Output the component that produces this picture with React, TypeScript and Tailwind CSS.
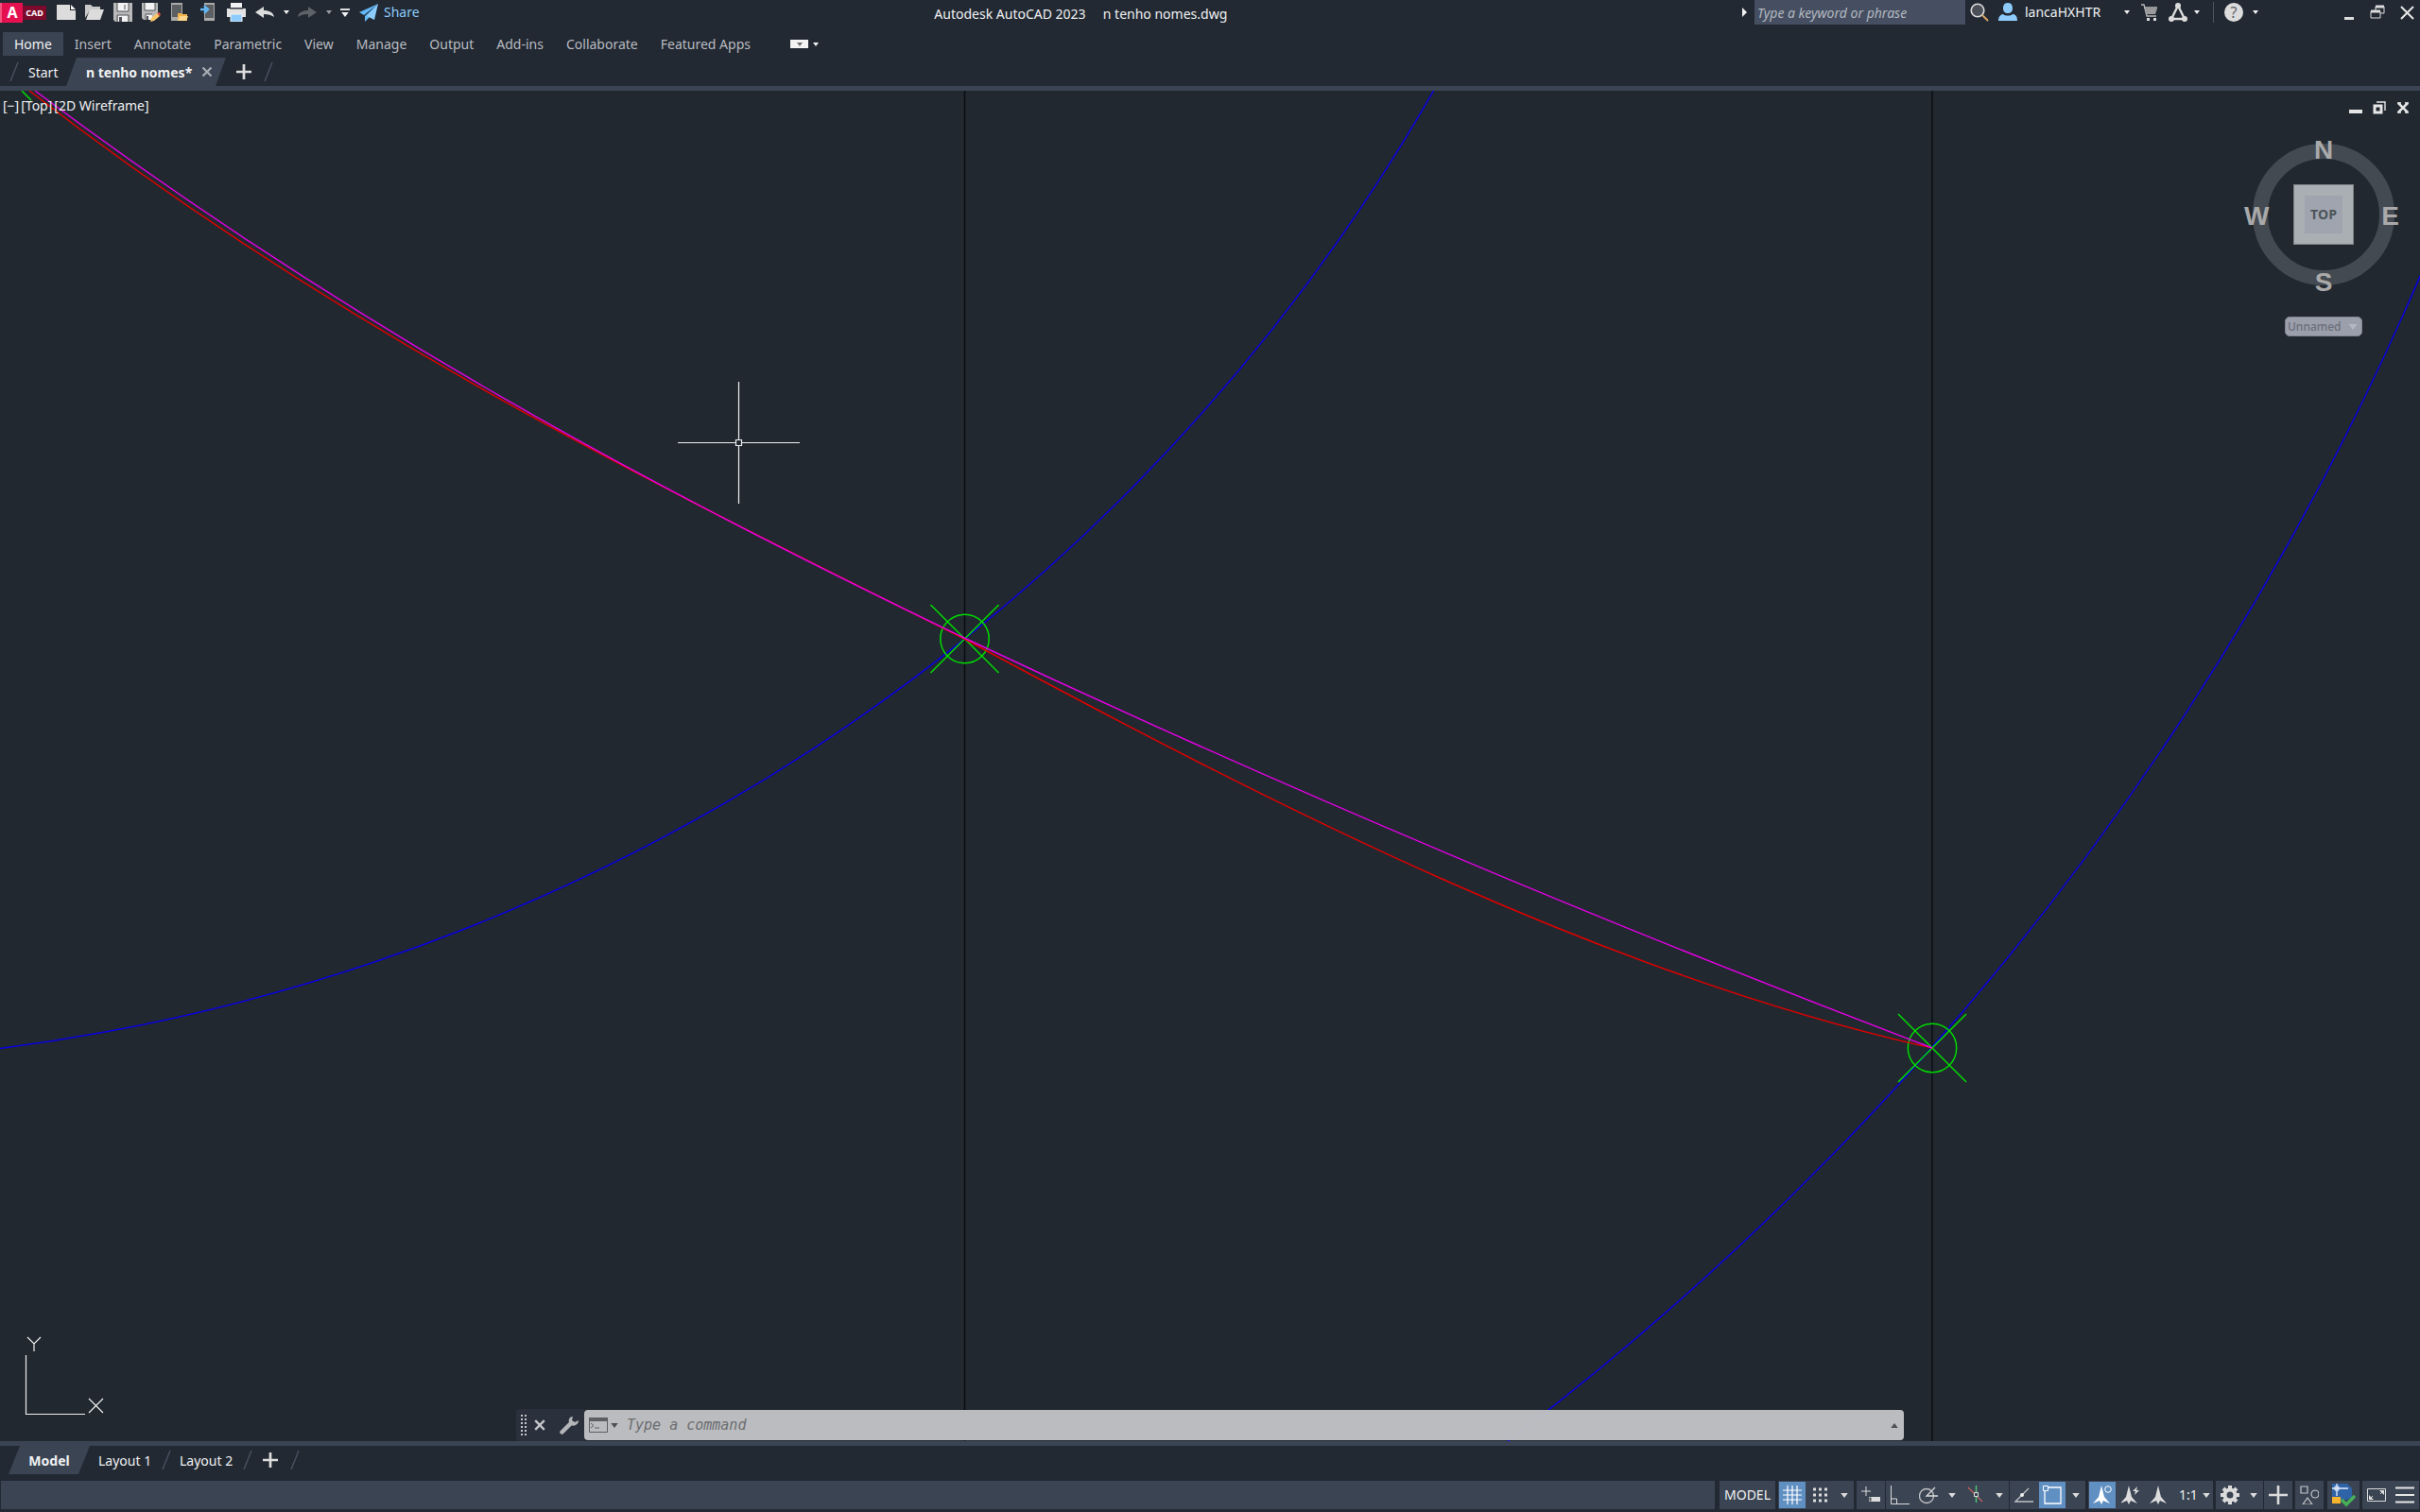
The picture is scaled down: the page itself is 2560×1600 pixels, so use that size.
import { ReactNode, useState } from "react";

const RIBBON_TABS = [
  "Home",
  "Insert",
  "Annotate",
  "Parametric",
  "View",
  "Manage",
  "Output",
  "Add-ins",
  "Collaborate",
  "Featured Apps",
];

export default function App() {
  return (
    <div className="flex h-screen w-full flex-col overflow-hidden bg-[#222933] font-['Noto_Sans',sans-serif] text-sm text-[#f0f1f2]">
      <header className="shrink-0">
        <TitleBar />
        <Ribbon />
        <DocumentTabs />
      </header>
      <Viewport />
      <LayoutTabs />
      <StatusBar />
    </div>
  );
}

function Icon(props: { children: ReactNode; className?: string }) {
  return (
    <svg
      viewBox="0 0 20 20"
      className={props.className ?? "size-5"}
      fill="none"
      aria-hidden="true"
    >
      {props.children}
    </svg>
  );
}

function IconButton(props: {
  label: string;
  children: ReactNode;
  className?: string;
}) {
  return (
    <button
      type="button"
      aria-label={props.label}
      className={`flex h-full shrink-0 items-center justify-center ${props.className ?? "w-[30px]"}`}
    >
      {props.children}
    </button>
  );
}

function Caret(props: { className?: string }) {
  return (
    <svg
      viewBox="0 0 6 4"
      className={props.className ?? "h-1 w-1.5"}
      aria-hidden="true"
    >
      <path d="M0 0h6L3 4z" fill="currentColor" />
    </svg>
  );
}

function Slash() {
  return (
    <svg viewBox="0 0 10 20" className="h-5 w-2.5 shrink-0" aria-hidden="true">
      <path d="M1 20L9 0" stroke="#4c5565" strokeWidth="1.3" />
    </svg>
  );
}

function Plus() {
  return (
    <Icon className="size-4">
      <path d="M10 0v20M0 10h20" stroke="#dcdcdc" strokeWidth="3.4" />
    </Icon>
  );
}

function TitleBar() {
  return (
    <div className="flex h-[26px] items-center">
      <button
        type="button"
        aria-label="Application menu"
        className="mr-1.5 flex h-full w-[49px] items-center"
      >
        <span className="flex h-[21px] w-6 items-center justify-center border-l-2 border-[#f2557f] bg-[#e51050] text-base leading-none font-bold text-white">
          A
        </span>
        <span className="flex h-[15px] w-[25px] items-center justify-center bg-[#7b0a2c] text-[9px] leading-none font-bold text-white">
          CAD
        </span>
      </button>
      <IconButton label="New">
        <Icon>
          <path d="M0 2h14v6h6v10H0z" fill="#dcdcdc" />
          <path d="M15 2l5 5h-5z" fill="#f5f5f5" />
        </Icon>
      </IconButton>
      <IconButton label="Open">
        <Icon>
          <path d="M0 2h6l2 2h8v4H5L0 16z" fill="#c9c9c9" />
          <path d="M5 7h15l-4 11H1z" fill="#dcdcdc" />
        </Icon>
      </IconButton>
      <IconButton label="Save">
        <Icon>
          <path d="M0 0h20v20H2l-2-2z" fill="#b9b9b9" />
          <path d="M4 0h12v9H4zM5 13h10v7H5z" fill="#f3f3f3" />
          <path d="M4 0v9h12V0M12 2v5M4 20v-7h12v7" stroke="#4e5257" />
          <path d="M6 15h3v5H6z" fill="#4e5257" />
        </Icon>
      </IconButton>
      <IconButton label="Save As">
        <Icon>
          <path d="M0 0h17v12l-6 6H2l-2-2z" fill="#b9b9b9" />
          <path d="M3 0h11v8H3zM4 12h7v6H4z" fill="#f3f3f3" />
          <path d="M3 0v8h11V0M4 18v-6h7" stroke="#4e5257" />
          <path d="M5 14h2v4H5z" fill="#4e5257" />
          <path d="M9 20l1-4 6-5 3 3-6 5z" fill="#f7c667" />
          <path d="M16 11l2-1 2 2-1 2z" fill="#e2543f" />
        </Icon>
      </IconButton>
      <IconButton label="Open from Web & Mobile">
        <Icon>
          <path d="M1 0h12v19H1z" fill="#aaa" />
          <path d="M2 2h10v13H2z" fill="#5c5f62" />
          <path d="M8 11h4l1 1h5v7H8z" fill="#f2b24a" />
          <path d="M10 14h9l-2 5H8z" fill="#fbd58c" />
        </Icon>
      </IconButton>
      <IconButton label="Save to Web & Mobile">
        <Icon>
          <path d="M6 0h11v19H6z" fill="#aaa" />
          <path d="M7 2h9v14H7z" fill="#5c5f62" />
          <path d="M2 7h6M6 3l4 4-4 4" stroke="#63b8f7" strokeWidth="2.4" />
        </Icon>
      </IconButton>
      <IconButton label="Plot">
        <Icon>
          <path d="M4 0h12v5H4z" fill="#f2f2f2" />
          <path d="M0 6h20v9H0z" fill="#e3e3e3" />
          <path d="M3 6h14" stroke="#4e5257" strokeWidth="1.4" />
          <path d="M4 12h12v8H4z" fill="#8ccbfa" stroke="#f2f2f2" />
        </Icon>
      </IconButton>
      <IconButton label="Undo">
        <Icon>
          <path
            d="M0 10l9-6v4c6 0 10 2 11 7-3-2-6-3-11-3v4z"
            fill="#dcdcdc"
          />
        </Icon>
      </IconButton>
      <IconButton label="Undo history" className="w-[15px]">
        <Caret />
      </IconButton>
      <IconButton label="Redo">
        <Icon>
          <path
            d="M20 10l-9-6v4C5 8 1 10 0 15c3-2 6-3 11-3v4z"
            fill="#5d6269"
          />
        </Icon>
      </IconButton>
      <IconButton label="Redo history" className="w-[15px] text-[#9a9da2]">
        <Caret />
      </IconButton>
      <IconButton
        label="Customize Quick Access Toolbar"
        className="w-5 flex-col gap-0.5"
      >
        <span className="h-0.5 w-2.5 bg-[#dcdcdc]" />
        <Caret className="h-[5px] w-2.5" />
      </IconButton>
      <button
        type="button"
        className="flex items-center gap-1.5 pl-[5px] text-sm text-[#8ccbfa]"
      >
        <Icon>
          <path d="M20 1L0 10l5 3zM20 1L6 14v6l4-4z" fill="#63b8f7" />
          <path d="M20 1L8 14l8 4z" fill="#8ccbfa" />
        </Icon>
        Share
      </button>
      <h1 className="flex-1 pt-1 text-center text-sm whitespace-pre">
        {"Autodesk AutoCAD 2023     n tenho nomes.dwg"}
      </h1>
      <IconButton label="Collapse search" className="w-[13px] pr-2">
        <svg viewBox="0 0 5 10" className="h-2.5 w-[5px]" aria-hidden="true">
          <path d="M0 0l5 5-5 5z" fill="#f0f1f2" />
        </svg>
      </IconButton>
      <input
        type="text"
        aria-label="Search"
        placeholder="Type a keyword or phrase"
        className="h-[26px] w-[223px] bg-[#454f61] px-[3px] text-sm italic outline-none placeholder:text-[#b4b8c0]"
      />
      <IconButton label="Search">
        <Icon>
          <circle cx="8" cy="8" r="6.8" fill="#4b5058" stroke="#dcdcdc" strokeWidth="1.6" />
          <path d="M13 13l6 6" stroke="#d8a364" strokeWidth="2" />
        </Icon>
      </IconButton>
      <button
        type="button"
        className="flex h-full w-[132px] items-center gap-2 pl-[5px]"
      >
        <Icon>
          <path
            d="M10 0c4 0 5 3 5 6s-2 5-5 5-5-2-5-5 1-6 5-6zM0 19c0-5 3-7 5-7 2 2 8 2 10 0 3 0 5 2 5 7z"
            fill="#8ccbfa"
          />
        </Icon>
        lancaHXHTR
      </button>
      <IconButton label="Account menu" className="w-[18px]">
        <Caret />
      </IconButton>
      <IconButton label="Autodesk App Store">
        <Icon>
          <path d="M1 2h3l3 12h10M4 5h14" stroke="#b9b9b9" strokeWidth="1.3" />
          <path d="M5 6h13l-2 6H7z" fill="#9a9a9a" />
          <path d="M7 16h3v3H7zM14 16h3v3h-3z" fill="#dcdcdc" />
        </Icon>
      </IconButton>
      <IconButton label="Autodesk">
        <Icon>
          <path
            d="M10 3L3 17h14z"
            stroke="#dcdcdc"
            strokeWidth="2.4"
            strokeLinejoin="round"
          />
          <circle cx="10" cy="3" r="3" fill="#dcdcdc" />
          <circle cx="3" cy="17" r="3" fill="#dcdcdc" />
          <circle cx="17" cy="17" r="3" fill="#dcdcdc" />
        </Icon>
      </IconButton>
      <IconButton label="Autodesk menu" className="w-2.5">
        <Caret />
      </IconButton>
      <span className="mr-1.5 ml-3 h-[22px] w-px bg-[#4c5565]" />
      <IconButton label="Help">
        <span className="flex size-5 items-center justify-center rounded-full bg-[#dcdcdc] text-base leading-none text-[#5c6067]">
          ?
        </span>
      </IconButton>
      <IconButton label="Help menu" className="w-4">
        <Caret />
      </IconButton>
      <IconButton label="Minimize" className="ml-[76px] w-[30px]">
        <Icon>
          <path d="M5 15h10v3H5z" fill="#dcdcdc" />
        </Icon>
      </IconButton>
      <IconButton label="Restore">
        <Icon>
          <path d="M8 8V4h9v7h-4" stroke="#dcdcdc" />
          <path d="M8 4h9M3 9h10" stroke="#dcdcdc" strokeWidth="3" />
          <path d="M3 9h10v7H3z" stroke="#dcdcdc" />
        </Icon>
      </IconButton>
      <IconButton label="Close">
        <Icon>
          <path d="M5 4l13 13M18 4L5 17" stroke="#e6e6e6" strokeWidth="2" />
        </Icon>
      </IconButton>
    </div>
  );
}

function Ribbon() {
  const [tab, setTab] = useState("Home");

  return (
    <nav className="flex h-[35px] items-center pt-2 pb-0.5 pl-[3px]">
      {RIBBON_TABS.map((name) => (
        <button
          key={name}
          type="button"
          onClick={() => {
            setTab(name);
          }}
          data-active={tab === name}
          className="h-[25px] px-3 leading-5 whitespace-nowrap text-[#b8bbc0] data-[active=true]:bg-[#3b4453] data-[active=true]:text-[#f0f1f2]"
        >
          {name}
        </button>
      ))}
      <button
        type="button"
        aria-label="Minimize ribbon"
        className="ml-[30px] flex h-[9px] w-[19px] items-center justify-center bg-[#f3f3f3] text-[#6a6d72]"
      >
        <Caret />
      </button>
      <IconButton label="Ribbon options" className="w-4">
        <Caret />
      </IconButton>
    </nav>
  );
}

function DocumentTabs() {
  return (
    <div className="flex h-[30px] items-center pl-2.5">
      <Slash />
      <button type="button" className="w-[50px] pt-0.5 pl-2.5 text-left leading-5">
        Start
      </button>
      <div className="flex h-[30px] w-[169px] items-center justify-between bg-[#3b4453] pr-[15px] pl-[21px] [clip-path:polygon(11px_0,100%_0,calc(100%-11px)_100%,0_100%)]">
        <button
          type="button"
          className="pt-0.5 text-sm font-bold whitespace-nowrap"
        >
          n tenho nomes*
        </button>
        <button type="button" aria-label="Close tab">
          <Icon className="size-2.5">
            <path d="M1 1l18 18M19 1L1 19" stroke="#a9adb4" strokeWidth="4.4" />
          </Icon>
        </button>
      </div>
      <IconButton label="New tab" className="ml-1 w-[30px]">
        <Plus />
      </IconButton>
      <span className="pl-1.5">
        <Slash />
      </span>
    </div>
  );
}

function NodeMark(props: { x: number; y: number }) {
  const { x, y } = props;
  return (
    <g stroke="#00dc00" strokeWidth="1.5">
      <circle cx={x} cy={y} r="25.7" />
      <path
        d={`M${x - 36} ${y - 36}L${x + 36} ${y + 36}M${x + 36} ${y - 36}L${x - 36} ${y + 36}`}
      />
    </g>
  );
}

function Drawing() {
  return (
    <svg
      viewBox="0 96 2560 1429"
      preserveAspectRatio="xMinYMin slice"
      className="absolute inset-0 size-full"
      fill="none"
      role="img"
      aria-label="Drawing"
    >
      <path d="M1020.5 96V1525" stroke="#090b0e" strokeWidth="1.4" />
      <path d="M2044 96V1525" stroke="#10141a" strokeWidth="2" />
      <g stroke="#0a00e0" strokeWidth="1.5">
        <circle cx="-260" cy="-921" r="2047" />
        <circle cx="-260" cy="-921" r="3070" />
      </g>
      <path d="M23 96l10 10" stroke="#00dc00" strokeWidth="1.5" />
      <NodeMark x={1020.5} y={676} />
      <NodeMark x={2044} y={1109} />
      <path
        d="M31 96C361 352 690 511 1020 676C1361 860 1703 1033 2044 1109"
        stroke="#e00000"
        strokeWidth="1.5"
      />
      <path
        d="M37 96C365 342 692 518 1020 675C1361 836 1703 979 2044 1109"
        stroke="#e000e0"
        strokeWidth="1.5"
      />
      <g stroke="#f0f0f0" strokeWidth="1.2">
        <path d="M717 468.5H778M785 468.5H846M781.5 404V465M781.5 472V533" />
        <path d="M778.5 465.5h6v6h-6z" />
      </g>
    </svg>
  );
}

function Viewport() {
  return (
    <main className="relative min-h-0 flex-1 overflow-hidden border-y-5 border-[#3b4453] bg-[#212830]">
      <Drawing />
      <div className="absolute top-1.5 left-[3px] flex gap-0.5 leading-5">
        <button type="button">[−]</button>
        <button type="button">[Top]</button>
        <button type="button">[2D Wireframe]</button>
      </div>
      <div className="absolute top-2 right-1.5 flex h-5 items-center">
        <IconButton label="Minimize viewport" className="w-[25px]">
          <Icon>
            <path d="M3 12h14v4H3z" fill="#e6e6e6" />
          </Icon>
        </IconButton>
        <IconButton label="Maximize viewport" className="w-[25px]">
          <Icon>
            <path d="M7 4h9v9" stroke="#e6e6e6" strokeWidth="1.4" />
            <path d="M5 8h7v7H5z" stroke="#e6e6e6" strokeWidth="3" />
          </Icon>
        </IconButton>
        <IconButton label="Close viewport" className="w-[25px]">
          <Icon>
            <path d="M5 5l10 10M15 5L5 15" stroke="#e6e6e6" strokeWidth="2.6" />
            <path d="M4 5h4M12 5h4M4 15h4M12 15h4" stroke="#e6e6e6" strokeWidth="1.6" />
          </Icon>
        </IconButton>
      </div>
      <ViewCube />
      <svg
        viewBox="0 0 84 84"
        className="absolute bottom-[27px] left-[26px] size-[84px]"
        fill="none"
        stroke="#f0f0f0"
        strokeWidth="1.2"
        aria-hidden="true"
      >
        <path d="M1.5 20V82.5H64" />
        <path d="M3 1l7 7 7-7M10 8v8M68 66l15 15M83 66L68 81" />
      </svg>
      <CommandLine />
    </main>
  );
}

function ViewCube() {
  return (
    <div className="absolute top-[43px] right-[14px] flex w-[176px] flex-col items-center gap-5">
      <div className="grid h-[176px] w-full place-items-center font-['Liberation_Sans',sans-serif]">
        <svg
          viewBox="0 0 176 176"
          className="col-start-1 row-start-1 size-[176px]"
          fill="none"
          aria-hidden="true"
        >
          <circle cx="88" cy="88" r="67" stroke="#444a51" strokeWidth="16" />
        </svg>
        <div className="col-start-1 row-start-1 flex h-full w-full flex-col items-center justify-between pt-1.5 pb-0.5 text-[28px] leading-7 font-bold text-[#a9a9a9]">
          <span>N</span>
          <span className="flex w-full justify-between pr-2 pl-1">
            <span>W</span>
            <span>E</span>
          </span>
          <span>S</span>
        </div>
        <button
          type="button"
          className="col-start-1 row-start-1 grid size-16 place-items-center border border-[#7c8286] bg-[#a9afb3]"
        >
          <span className="grid size-10 place-items-center bg-[#9fa4ae] font-['Open_Sans',sans-serif] text-sm font-bold text-[#4b5459]">
            TOP
          </span>
        </button>
      </div>
      <button
        type="button"
        className="flex h-[21px] w-[82px] items-center justify-between rounded-[5px] border border-[#7f8591] bg-[#9b9fab] pr-1 pl-0.5 text-xs font-medium text-[#6a6e79]"
      >
        Unnamed
        <Caret className="h-1.5 w-2.5 text-[#b4b8c1]" />
      </button>
    </div>
  );
}

function CommandLine() {
  return (
    <div className="absolute inset-x-0 bottom-0 mx-[546px] flex h-[34px] items-center rounded-l">
      <span className="flex h-full w-[72px] shrink-0 items-center rounded-l bg-[#2a303c]">
        <svg viewBox="0 0 6 22" className="ml-[5px] h-[22px] w-1.5" aria-hidden="true">
          <path
            d="M1 0v22M5 0v22"
            stroke="#c4c6c9"
            strokeWidth="2"
            strokeDasharray="2 2"
          />
        </svg>
        <IconButton label="Close command line" className="ml-2 w-3">
          <Icon className="size-3">
            <path d="M2 2l16 16M18 2L2 18" stroke="#c4c6c9" strokeWidth="4" />
          </Icon>
        </IconButton>
        <IconButton label="Customize" className="ml-[15px] w-5">
          <Icon>
            <path
              d="M2.5 17.5L12 8"
              stroke="#b4b6b9"
              strokeWidth="4.5"
              strokeLinecap="round"
            />
            <path
              d="M14 1c-3 0-5 3-4 6s4 5 7 3c2-1 3-3 3-5l-4 2-3-2z"
              fill="#b4b6b9"
            />
          </Icon>
        </IconButton>
      </span>
      <label className="flex h-8 flex-1 items-center rounded-sm bg-[#c2c3c5]/96 px-[5px]">
        <svg viewBox="0 0 20 16" className="h-4 w-5" fill="none" aria-hidden="true">
          <path d="M.5.5h19v15H.5z" stroke="#5c5e61" />
          <path d="M0 0h20v4H0z" fill="#5c5e61" />
          <path d="M2 6l3 2.5L2 11M6 11h5" stroke="#5c5e61" />
        </svg>
        <Caret className="ml-0.5 h-[5px] w-2.5 text-[#4e5053]" />
        <input
          type="text"
          aria-label="Command"
          placeholder="Type a command"
          className="ml-2 h-full flex-1 bg-transparent font-['DejaVu_Sans_Mono',monospace] text-[15px] text-[#333] italic outline-none placeholder:text-[#6b6d70]"
        />
        <Caret className="h-[5px] w-2.5 rotate-180 text-[#4e5053]" />
      </label>
    </div>
  );
}

function LayoutTabs() {
  return (
    <div className="flex h-[30px] shrink-0 items-center pl-[9px]">
      <button
        type="button"
        className="h-full w-[86px] bg-[#3b4453] pt-0.5 font-bold [clip-path:polygon(12px_0,100%_0,calc(100%-12px)_100%,0_100%)]"
      >
        Model
      </button>
      <button type="button" className="w-[76px] pt-0.5 pl-[9px] text-left">
        Layout 1
      </button>
      <Slash />
      <button type="button" className="w-[76px] pt-0.5 pl-[9px] text-left">
        Layout 2
      </button>
      <Slash />
      <IconButton label="New layout" className="ml-1 w-[30px]">
        <Plus />
      </IconButton>
      <span className="pl-1.5">
        <Slash />
      </span>
    </div>
  );
}

function Group(props: { children: ReactNode; className?: string }) {
  return (
    <div
      className={`flex h-[30px] shrink-0 items-center bg-[#3b4453] ${props.className ?? "ml-[3px]"}`}
    >
      {props.children}
    </div>
  );
}

function Toggle(props: { label: string; on?: boolean; children: ReactNode }) {
  return (
    <button
      type="button"
      aria-label={props.label}
      aria-pressed={props.on ?? false}
      className="mx-px flex size-7 items-center justify-center aria-pressed:bg-[#608fc2]"
    >
      {props.children}
    </button>
  );
}

function Drop(props: { label: string }) {
  return (
    <IconButton label={props.label} className="w-5 text-[#dcdcdc]">
      <Caret className="h-[5px] w-2.5" />
    </IconButton>
  );
}

function StatusBar() {
  return (
    <footer className="mt-[7px] mb-[3px] flex shrink-0 items-center pr-px pl-px">
      <div className="h-[30px] flex-1 bg-[#3b4453]" />
      <Group className="ml-[5px]">
        <button type="button" className="w-[59px] text-center text-sm">
          MODEL
        </button>
      </Group>
      <Group>
        <Toggle label="Grid" on>
          <Icon>
            <path
              d="M5 0v20M10 0v20M15 0v20M0 5h20M0 10h20M0 15h20"
              stroke="#fff"
              strokeWidth="1.2"
            />
          </Icon>
        </Toggle>
        <Toggle label="Snap mode">
          <Icon>
            <path
              d="M2 4h17M2 10h17M2 16h17"
              stroke="#dcdcdc"
              strokeWidth="3"
              strokeDasharray="3 3"
            />
          </Icon>
        </Toggle>
        <Drop label="Snap settings" />
      </Group>
      <Group>
        <Toggle label="Dynamic input">
          <Icon>
            <path d="M5 1v10M0 6h10" stroke="#dcdcdc" />
            <path d="M8 12h12v5H8z" fill="#dcdcdc" />
            <path d="M8.5 12.5h2v4h-2z" fill="#4e5257" />
          </Icon>
        </Toggle>
      </Group>
      <Group className="ml-px">
        <Toggle label="Ortho mode">
          <Icon>
            <path d="M.5 0v19.5H20M.5 14h6v5" stroke="#dcdcdc" />
          </Icon>
        </Toggle>
        <Toggle label="Polar tracking">
          <Icon>
            <circle cx="8" cy="11" r="7.5" stroke="#c0c2c5" strokeWidth="1.3" />
            <path d="M20 11H8l9-9" stroke="#dcdcdc" strokeWidth="1.3" />
          </Icon>
        </Toggle>
        <Drop label="Polar settings" />
        <Toggle label="Isometric drafting">
          <Icon>
            <path d="M2 2l15 15" stroke="#b8605f" strokeWidth="1.4" />
            <path d="M10.5 0v18" stroke="#4fc776" strokeWidth="1.4" />
            <path d="M8.5 7.5h4v4h-4z" stroke="#dcdcdc" fill="#3b4453" />
          </Icon>
        </Toggle>
        <Drop label="Isometric settings" />
      </Group>
      <Group className="ml-px">
        <Toggle label="Object snap tracking">
          <Icon>
            <path d="M20 17H1L15 3" stroke="#c0c2c5" strokeWidth="1.3" />
            <circle cx="8" cy="10" r="2" fill="#f0f0f0" />
          </Icon>
        </Toggle>
        <Toggle label="Object snap" on>
          <Icon>
            <path d="M5 2h14v17H2V5" stroke="#fff" strokeWidth="1.3" />
            <path d="M.5.5h5v5h-5z" stroke="#fff" />
          </Icon>
        </Toggle>
        <Drop label="Object snap settings" />
      </Group>
      <Group>
        <Toggle label="Annotation visibility" on>
          <Icon>
            <path d="M9 0l3 12 6 7-7-3-2 4-2-4-7 3 6-7z" fill="#fff" />
            <circle cx="16" cy="4" r="3.3" stroke="#fff" />
          </Icon>
        </Toggle>
        <Toggle label="Auto scale">
          <Icon>
            <path d="M8 0l3 12 6 7-7-3-2 4-2-4-7 3 6-7z" fill="#dcdcdc" />
            <path d="M17 1l-5 5h3l-1 4 5-5h-3z" fill="#dcdcdc" />
          </Icon>
        </Toggle>
        <Toggle label="Annotation scale">
          <Icon>
            <path d="M9 0l3 12 6 7-7-3-2 4-2-4-7 3 6-7z" fill="#dcdcdc" />
          </Icon>
        </Toggle>
        <button
          type="button"
          className="flex h-full w-[42px] items-center gap-1 pl-1.5 text-sm"
        >
          1:1
          <Caret className="h-[5px] w-2.5 text-[#dcdcdc]" />
        </button>
      </Group>
      <Group>
        <Toggle label="Workspace switching">
          <Icon>
            <circle cx="10" cy="10" r="5.5" stroke="#dcdcdc" strokeWidth="4" />
            <path
              d="M10 0v4M10 16v4M0 10h4M16 10h4M3 3l3 3M14 14l3 3M17 3l-3 3M6 14l-3 3"
              stroke="#dcdcdc"
              strokeWidth="4"
            />
          </Icon>
        </Toggle>
        <Drop label="Workspaces" />
      </Group>
      <Group className="ml-px">
        <Toggle label="Annotation monitor">
          <Icon>
            <path d="M10 0v20M0 10h20" stroke="#dcdcdc" strokeWidth="2.6" />
          </Icon>
        </Toggle>
      </Group>
      <Group>
        <Toggle label="Isolate objects">
          <Icon>
            <path d="M1 1h7v7H1zM8 13l5 7H3z" stroke="#c6c8cb" strokeWidth="1.2" />
            <circle cx="16" cy="9" r="4" stroke="#c6c8cb" strokeWidth="1.2" />
          </Icon>
        </Toggle>
      </Group>
      <Group className="ml-1">
        <IconButton label="Graphics performance" className="w-[34px]">
          <svg viewBox="0 0 26 26" className="size-[26px]" fill="none" aria-hidden="true">
            <path d="M1 1h16l5 5v10l-6 2H1z" fill="#2f63a8" />
            <path d="M1 15h9v7H1z" fill="#f5b32e" />
            <path d="M6 1v13M1 6h17" stroke="#e6f0fa" strokeWidth="1.3" />
            <path d="M4 4h4v4H4z" stroke="#e6f0fa" />
            <path d="M11 18l5 5 9-9" stroke="#45b058" strokeWidth="3.5" />
          </svg>
        </IconButton>
      </Group>
      <Group>
        <Toggle label="Clean screen">
          <Icon>
            <path d="M.5 3.5h19v13H.5z" stroke="#dcdcdc" />
            <path d="M13 5h5v5zM2 10v5h5z" fill="#dcdcdc" />
            <path d="M3 14l3-3M17 6l-3 3" stroke="#dcdcdc" />
          </Icon>
        </Toggle>
        <Toggle label="Customization">
          <Icon>
            <path d="M0 2.5h20M0 10h20M0 17.5h20" stroke="#e6e6e6" strokeWidth="2.2" />
          </Icon>
        </Toggle>
      </Group>
    </footer>
  );
}
